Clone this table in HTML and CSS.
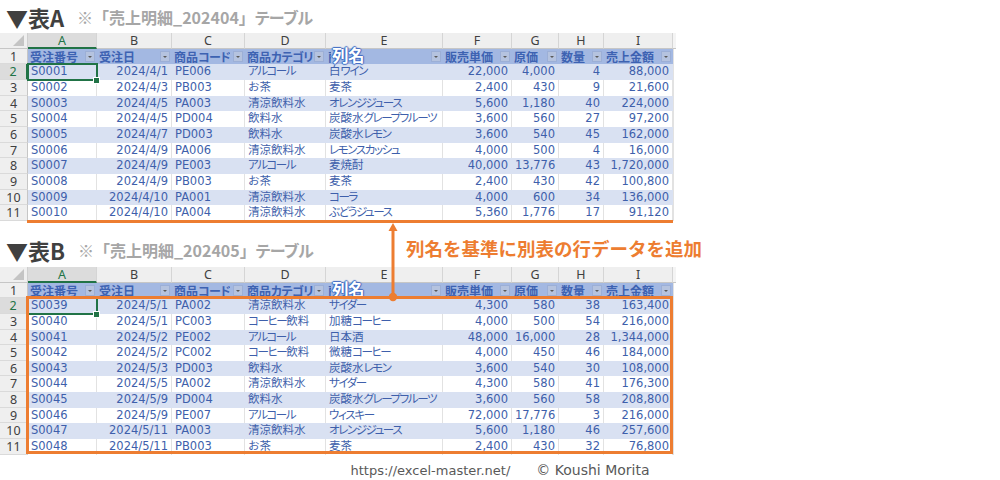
FILE: index.html
```html
<!DOCTYPE html>
<html lang="ja">
<head>
<meta charset="utf-8">
<title>表A 表B</title>
<link rel="stylesheet" href="styles.css">
</head>
<body>
<div class="page">
  <section class="block">
    <h2 class="title"><span class="tname">▼表A</span><span class="tsub">※「売上明細_202404」<span class="k">テーブル</span></span></h2>
    <div class="sheet">
      <div class="row letters">
        <div class="corner"><span class="tri"></span></div>
        <div class="ch sel">A</div><div class="ch">B</div><div class="ch">C</div><div class="ch">D</div><div class="ch">E</div><div class="ch">F</div><div class="ch">G</div><div class="ch">H</div><div class="ch">I</div><div class="ch ext"></div>
      </div>
      <div class="row head">
        <div class="rh">1</div>
        <div class="hd"><span>受注番号</span><i class="fb"></i></div>
        <div class="hd"><span>受注日</span><i class="fb"></i></div>
        <div class="hd"><span>商品<span class="k">コード</span></span><i class="fb"></i></div>
        <div class="hd"><span>商品<span class="k">カテゴリ</span></span><i class="fb"></i></div>
        <div class="hd e"><span>商品名</span><i class="fb"></i><b class="colname">列名</b></div>
        <div class="hd"><span>販売単価</span><i class="fb"></i></div>
        <div class="hd"><span>原価</span><i class="fb"></i></div>
        <div class="hd"><span>数量</span><i class="fb"></i></div>
        <div class="hd"><span>売上金額</span><i class="fb"></i></div>
        <div class="x"></div>
      </div>
      <div class="row band"><div class="rh sel">2</div><div class="c cur">S0001</div><div class="c r">2024/4/1</div><div class="c">PE006</div><div class="c"><span class="k">アルコール</span></div><div class="c">白<span class="k">ワイン</span></div><div class="c r">22,000</div><div class="c r">4,000</div><div class="c r">4</div><div class="c r">88,000</div><div class="x"></div></div>
      <div class="row"><div class="rh">3</div><div class="c">S0002</div><div class="c r">2024/4/3</div><div class="c">PB003</div><div class="c">お茶</div><div class="c">麦茶</div><div class="c r">2,400</div><div class="c r">430</div><div class="c r">9</div><div class="c r">21,600</div><div class="x"></div></div>
      <div class="row band"><div class="rh">4</div><div class="c">S0003</div><div class="c r">2024/4/5</div><div class="c">PA003</div><div class="c">清涼飲料水</div><div class="c"><span class="k">オレンジジュース</span></div><div class="c r">5,600</div><div class="c r">1,180</div><div class="c r">40</div><div class="c r">224,000</div><div class="x"></div></div>
      <div class="row"><div class="rh">5</div><div class="c">S0004</div><div class="c r">2024/4/5</div><div class="c">PD004</div><div class="c">飲料水</div><div class="c">炭酸水<span class="k">グレープフルーツ</span></div><div class="c r">3,600</div><div class="c r">560</div><div class="c r">27</div><div class="c r">97,200</div><div class="x"></div></div>
      <div class="row band"><div class="rh">6</div><div class="c">S0005</div><div class="c r">2024/4/7</div><div class="c">PD003</div><div class="c">飲料水</div><div class="c">炭酸水<span class="k">レモン</span></div><div class="c r">3,600</div><div class="c r">540</div><div class="c r">45</div><div class="c r">162,000</div><div class="x"></div></div>
      <div class="row"><div class="rh">7</div><div class="c">S0006</div><div class="c r">2024/4/9</div><div class="c">PA006</div><div class="c">清涼飲料水</div><div class="c"><span class="k">レモンスカッシュ</span></div><div class="c r">4,000</div><div class="c r">500</div><div class="c r">4</div><div class="c r">16,000</div><div class="x"></div></div>
      <div class="row band"><div class="rh">8</div><div class="c">S0007</div><div class="c r">2024/4/9</div><div class="c">PE003</div><div class="c"><span class="k">アルコール</span></div><div class="c">麦焼酎</div><div class="c r">40,000</div><div class="c r">13,776</div><div class="c r">43</div><div class="c r">1,720,000</div><div class="x"></div></div>
      <div class="row"><div class="rh">9</div><div class="c">S0008</div><div class="c r">2024/4/9</div><div class="c">PB003</div><div class="c">お茶</div><div class="c">麦茶</div><div class="c r">2,400</div><div class="c r">430</div><div class="c r">42</div><div class="c r">100,800</div><div class="x"></div></div>
      <div class="row band"><div class="rh">10</div><div class="c">S0009</div><div class="c r">2024/4/10</div><div class="c">PA001</div><div class="c">清涼飲料水</div><div class="c"><span class="k">コーラ</span></div><div class="c r">4,000</div><div class="c r">600</div><div class="c r">34</div><div class="c r">136,000</div><div class="x"></div></div>
      <div class="row"><div class="rh">11</div><div class="c">S0010</div><div class="c r">2024/4/10</div><div class="c">PA004</div><div class="c">清涼飲料水</div><div class="c"><span class="k">ぶどうジュース</span></div><div class="c r">5,360</div><div class="c r">1,776</div><div class="c r">17</div><div class="c r">91,120</div><div class="x"></div></div>
      <div class="hl-under"></div>
    </div>
  </section>

  <section class="block block-b">
    <h2 class="title"><span class="tname">▼表B</span><span class="tsub">※「売上明細_202405」<span class="k">テーブル</span></span></h2>
    <div class="sheet">
      <div class="row letters">
        <div class="corner"><span class="tri"></span></div>
        <div class="ch sel">A</div><div class="ch">B</div><div class="ch">C</div><div class="ch">D</div><div class="ch">E</div><div class="ch">F</div><div class="ch">G</div><div class="ch">H</div><div class="ch">I</div><div class="ch ext"></div>
      </div>
      <div class="row head">
        <div class="rh">1</div>
        <div class="hd"><span>受注番号</span><i class="fb"></i></div>
        <div class="hd"><span>受注日</span><i class="fb"></i></div>
        <div class="hd"><span>商品<span class="k">コード</span></span><i class="fb"></i></div>
        <div class="hd"><span>商品<span class="k">カテゴリ</span></span><i class="fb"></i></div>
        <div class="hd e"><span>商品名</span><i class="fb"></i><b class="colname">列名</b></div>
        <div class="hd"><span>販売単価</span><i class="fb"></i></div>
        <div class="hd"><span>原価</span><i class="fb"></i></div>
        <div class="hd"><span>数量</span><i class="fb"></i></div>
        <div class="hd"><span>売上金額</span><i class="fb"></i></div>
        <div class="x"></div>
      </div>
      <div class="row band"><div class="rh sel">2</div><div class="c cur">S0039</div><div class="c r">2024/5/1</div><div class="c">PA002</div><div class="c">清涼飲料水</div><div class="c"><span class="k">サイダー</span></div><div class="c r">4,300</div><div class="c r">580</div><div class="c r">38</div><div class="c r">163,400</div><div class="x"></div></div>
      <div class="row"><div class="rh">3</div><div class="c">S0040</div><div class="c r">2024/5/1</div><div class="c">PC003</div><div class="c"><span class="k">コーヒー</span>飲料</div><div class="c">加糖<span class="k">コーヒー</span></div><div class="c r">4,000</div><div class="c r">500</div><div class="c r">54</div><div class="c r">216,000</div><div class="x"></div></div>
      <div class="row band"><div class="rh">4</div><div class="c">S0041</div><div class="c r">2024/5/2</div><div class="c">PE002</div><div class="c"><span class="k">アルコール</span></div><div class="c">日本酒</div><div class="c r">48,000</div><div class="c r">16,000</div><div class="c r">28</div><div class="c r">1,344,000</div><div class="x"></div></div>
      <div class="row"><div class="rh">5</div><div class="c">S0042</div><div class="c r">2024/5/2</div><div class="c">PC002</div><div class="c"><span class="k">コーヒー</span>飲料</div><div class="c">微糖<span class="k">コーヒー</span></div><div class="c r">4,000</div><div class="c r">450</div><div class="c r">46</div><div class="c r">184,000</div><div class="x"></div></div>
      <div class="row band"><div class="rh">6</div><div class="c">S0043</div><div class="c r">2024/5/3</div><div class="c">PD003</div><div class="c">飲料水</div><div class="c">炭酸水<span class="k">レモン</span></div><div class="c r">3,600</div><div class="c r">540</div><div class="c r">30</div><div class="c r">108,000</div><div class="x"></div></div>
      <div class="row"><div class="rh">7</div><div class="c">S0044</div><div class="c r">2024/5/5</div><div class="c">PA002</div><div class="c">清涼飲料水</div><div class="c"><span class="k">サイダー</span></div><div class="c r">4,300</div><div class="c r">580</div><div class="c r">41</div><div class="c r">176,300</div><div class="x"></div></div>
      <div class="row band"><div class="rh">8</div><div class="c">S0045</div><div class="c r">2024/5/9</div><div class="c">PD004</div><div class="c">飲料水</div><div class="c">炭酸水<span class="k">グレープフルーツ</span></div><div class="c r">3,600</div><div class="c r">560</div><div class="c r">58</div><div class="c r">208,800</div><div class="x"></div></div>
      <div class="row"><div class="rh">9</div><div class="c">S0046</div><div class="c r">2024/5/9</div><div class="c">PE007</div><div class="c"><span class="k">アルコール</span></div><div class="c"><span class="k">ウィスキー</span></div><div class="c r">72,000</div><div class="c r">17,776</div><div class="c r">3</div><div class="c r">216,000</div><div class="x"></div></div>
      <div class="row band"><div class="rh">10</div><div class="c">S0047</div><div class="c r">2024/5/11</div><div class="c">PA003</div><div class="c">清涼飲料水</div><div class="c"><span class="k">オレンジジュース</span></div><div class="c r">5,600</div><div class="c r">1,180</div><div class="c r">46</div><div class="c r">257,600</div><div class="x"></div></div>
      <div class="row"><div class="rh">11</div><div class="c">S0048</div><div class="c r">2024/5/11</div><div class="c">PB003</div><div class="c">お茶</div><div class="c">麦茶</div><div class="c r">2,400</div><div class="c r">430</div><div class="c r">32</div><div class="c r">76,800</div><div class="x"></div></div>
      <div class="hl-box"></div>
    </div>
  </section>

  <p class="credit"><span>https://excel-master.net/</span><span class="copy">© Koushi Morita</span></p>

  <svg class="arrow" width="18" height="86" viewBox="0 0 18 86" aria-hidden="true">
    <line x1="9" y1="10" x2="9" y2="78" stroke="#ED7D31" stroke-width="3"/>
    <polygon points="9,4 4.5,12 13.5,12" fill="#ED7D31"/>
    <circle cx="9" cy="78" r="4.2" fill="#ED7D31"/>
  </svg>
  <div class="note">列名を基準に別表の行データを追加</div>
</div>
</body>
</html>
```

FILE: styles.css
```css
html, body {
  margin: 0;
  padding: 0;
  background: #ffffff;
}

body {
  font-family: "Noto Sans CJK JP", sans-serif;
}

.page {
  position: relative;
  width: 1000px;
  height: 480px;
  overflow: hidden;
}

.block-b {
  margin-top: 13px;
}

.title {
  margin: 0;
  height: 33px;
  display: flex;
  align-items: center;
  padding-left: 6px;
  font-weight: 700;
  font-family: "Noto Sans CJK JP", sans-serif;
}

.tname {
  font-size: 22px;
  color: #404040;
}

.tsub {
  font-size: 16px;
  color: #a6a6a6;
  margin-left: 13px;
}

.tsub .k {
  font-feature-settings: "palt";
  letter-spacing: -0.5px;
}

.sheet {
  position: relative;
  display: grid;
  grid-template-columns: 28px 69px 75px 73px 81px 117px 69px 47px 45px 69px 3px;
  grid-auto-rows: 15.67px;
  width: 676px;
}

.row {
  display: contents;
}

.row > div {
  box-sizing: border-box;
  white-space: nowrap;
  overflow: hidden;
  line-height: 15.67px;
}

/* column letters */
.corner {
  background: #efefef;
  border-right: 1px solid #cfcfcf;
  border-bottom: 1px solid #c6c6c6;
  display: flex;
  justify-content: flex-end;
  align-items: flex-end;
  padding: 0 3px 2px 0;
}

.tri {
  width: 0;
  height: 0;
  border-left: 11px solid transparent;
  border-bottom: 11px solid #c4c4c4;
}

.ch {
  background: #efefef;
  border-right: 1px solid #d5d5d5;
  border-bottom: 1px solid #c6c6c6;
  text-align: center;
  font: 12.5px/15.67px "Noto Sans", sans-serif;
  color: #404040;
}

.ch.sel {
  background: #dcdcdc;
  color: #217346;
  border-bottom: 2px solid #217346;
}

.ch.ext {
  background: #f4f4f4;
  border-right: 0;
}

/* row numbers */
.rh {
  background: #efefef;
  border-right: 1px solid #c6c6c6;
  border-bottom: 1px solid #dadada;
  text-align: center;
  font: 12.5px/15.67px "Noto Sans", sans-serif;
  color: #404040;
}

.rh.sel {
  background: #dcdcdc;
  color: #217346;
  border-right: 2px solid #217346;
}

/* table header row */
.row > .hd {
  position: relative;
  overflow: visible;
  background: #a3b8e2;
  display: flex;
  align-items: center;
  justify-content: space-between;
  padding-left: 2px;
  font: 700 12px/15.67px "Noto Sans CJK JP", sans-serif;
  color: #3d62b2;
}

.hd > span {
  overflow: hidden;
  white-space: nowrap;
}

.hd .k {
  font-feature-settings: "palt";
  letter-spacing: -0.6px;
}

.fb {
  flex: none;
  position: relative;
  width: 10px;
  height: 11px;
  margin-right: 2px;
  background: #b5c3df;
  box-shadow: inset 0 0 0 1px #9cafd6;
}

.fb::after {
  content: "";
  position: absolute;
  left: 3px;
  top: 5px;
  border-left: 2px solid transparent;
  border-right: 2px solid transparent;
  border-top: 2px solid #5a5a5a;
}

.colname {
  position: absolute;
  left: 5px;
  top: 0;
  height: 15.67px;
  padding: 0 3px 0 1px;
  background: #a3b8e2;
  font: 700 16.5px/12.5px "Noto Sans CJK JP", sans-serif;
  color: #ffffff;
  letter-spacing: -0.5px;
  white-space: nowrap;
  z-index: 1;
  text-shadow:
    0 0 1px #3f6cc4,
    1px 0 1px #3f6cc4,
    -1px 0 1px #3f6cc4,
    0 1px 1px #3f6cc4,
    0 -1px 1px #3f6cc4;
}

/* data cells */
.c {
  padding: 0 3px;
  font: 11.5px/15.67px "DejaVu Sans", "Noto Sans CJK JP", sans-serif;
  color: #3e5fab;
  border-right: 1px solid #e2e2e2;
  background: #ffffff;
}

.c .k {
  font-feature-settings: "palt";
  letter-spacing: -1.4px;
}

.c.r {
  text-align: right;
}

.row.band > .c {
  background: #d9e1f2;
  border-right-color: #d9e1f2;
}

.x {
  background: #ffffff;
  border-left: 1px solid #e2e2e2;
}

.c.cur {
  position: relative;
  overflow: visible;
  outline: 2px solid #217346;
  outline-offset: -1px;
  z-index: 1;
}

.c.cur::after {
  content: "";
  position: absolute;
  right: -4px;
  bottom: -4px;
  width: 5px;
  height: 5px;
  background: #217346;
  border: 1px solid #ffffff;
}

/* orange highlights (annotation overlays) */
.hl-under {
  position: absolute;
  left: 27px;
  top: 186.5px;
  width: 646px;
  height: 3px;
  background: #ed7d31;
  z-index: 2;
}

.hl-box {
  position: absolute;
  left: 26px;
  top: 29px;
  width: 647px;
  height: 158px;
  box-sizing: border-box;
  border: 3px solid #ed7d31;
  z-index: 2;
}

.arrow {
  position: absolute;
  left: 384px;
  top: 219px;
  z-index: 3;
}

.note {
  position: absolute;
  left: 406px;
  top: 235px;
  font: 700 18.5px/26px "Noto Sans CJK JP", sans-serif;
  color: #ed7d31;
  white-space: nowrap;
}

.credit {
  margin: 5px 0 0;
  height: 20px;
  text-align: center;
  font: 13px/20px "DejaVu Sans", sans-serif;
  color: #595959;
}

.copy {
  margin-left: 26px;
  font-size: 14px;
}
```
